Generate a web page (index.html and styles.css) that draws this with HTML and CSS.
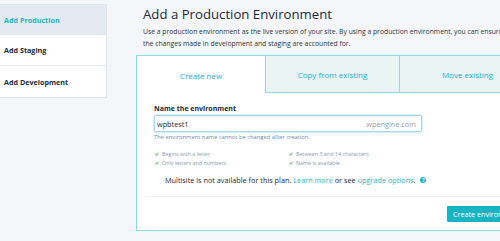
FILE: index.html
```html
<!DOCTYPE html>
<html>
<head>
<meta charset="utf-8">
<link rel="stylesheet" href="styles.css">
</head>
<body>
<div class="page">
  <nav class="sidebar">
    <div class="nav-item active">Add Production</div>
    <div class="nav-item">Add Staging</div>
    <div class="nav-item">Add Development</div>
  </nav>
  <main class="main">
    <h1 class="title">Add a Production Environment</h1>
    <p class="desc">Use a production environment as the live version of your site. By using a production environment, you can ensure that the changes made in development and staging are accounted for.</p>
    <div class="card">
      <div class="tabs">
        <div class="tab active">Create new</div>
        <div class="tab second">Copy from existing</div>
        <div class="tab">Move existing</div>
      </div>
      <div class="form">
        <div class="label">Name the environment</div>
        <div class="input">
          <span class="value">wpbtest1</span>
          <span class="suffix">.wpengine.com</span>
        </div>
        <div class="help">The environment name cannot be changed after creation.</div>
        <ul class="checks">
          <li><span class="tick">&#10004;</span>Begins with a letter</li>
          <li><span class="tick">&#10004;</span>Between 3 and 14 characters</li>
          <li><span class="tick">&#10004;</span>Only letters and numbers</li>
          <li><span class="tick">&#10004;</span>Name is available</li>
        </ul>
        <div class="multisite">Multisite is not available for this plan. <a class="link">Learn more</a> or see <a class="link">upgrade options</a>. <span class="qicon">?</span></div>
      </div>
      <div class="footer">
        <button class="btn">Create environment</button>
      </div>
    </div>
  </main>
</div>
</body>
</html>
```

FILE: styles.css
```css
html, body {
  margin: 0;
  padding: 0;
  overflow: hidden;
  background: #f4f6f9;
}
body {
  width: 500px;
  height: 241px;
  font-family: "Open Sans", "Liberation Sans", sans-serif;
  color: #1d2b3a;
}
.page {
  display: flex;
  align-items: flex-start;
  width: 640px;
}
.sidebar {
  width: 107px;
  margin-top: 4px;
  background: #fff;
  border: 1px solid #e1e5ea;
  border-left: none;
  box-sizing: border-box;
  flex-shrink: 0;
}
.nav-item {
  height: 31px;
  display: flex;
  align-items: center;
  padding-left: 4px;
  font-size: 7.2px;
  font-weight: 700;
  color: #1d2b3a;
  border-bottom: 1px solid #e6e9ee;
  box-sizing: border-box;
}
.nav-item:last-child {
  border-bottom: none;
}
.nav-item.active {
  background: #e3eaf1;
  color: #1fb5c4;
  height: 30px;
}
.main {
  margin-left: 29px;
  width: 420px;
  flex-shrink: 0;
}
.title {
  margin: 6px 0 0 7px;
  font-size: 13.2px;
  font-weight: 400;
  line-height: 17px;
  color: #1d2b3a;
}
.desc {
  margin: 3px 0 0 7px;
  width: 380px;
  font-size: 6.8px;
  line-height: 12px;
  color: #2a3848;
}
.card {
  margin-top: 5px;
  width: 400px;
  background: #fff;
  border: 1px solid #8fdbe2;
  box-sizing: border-box;
  height: 176px;
}
.tabs {
  display: flex;
  height: 37px;
}
.tab {
  flex: 1;
  display: flex;
  align-items: center;
  justify-content: center;
  font-size: 8px;
  color: #17b2c2;
  background: #eaf4f5;
  border-left: 1px solid #8fdbe2;
  border-bottom: 1px solid #8fdbe2;
  padding-top: 1px;
  box-sizing: border-box;
}
.tab.active {
  flex: 0 0 128px;
  background: #fff;
  border-left: none;
  border-bottom: none;
}
.tab.second {
  flex: 0 0 134px;
}
.form {
  margin: 0 0 0 9px;
  width: 380px;
  padding: 11px 0 11px 8px;
  border-bottom: 1px solid #eef1f4;
}
.label {
  font-size: 7px;
  font-weight: 700;
  line-height: 9px;
  color: #1d2b3a;
}
.input {
  margin-top: 2px;
  width: 268px;
  height: 17px;
  box-sizing: border-box;
  border: 1px solid #a9d7f0;
  box-shadow: 0 0 0 1px #d8eefa;
  border-radius: 2px;
  display: flex;
  align-items: center;
  justify-content: space-between;
  padding: 0 5px 0 2px;
  font-size: 7.3px;
}
.value {
  color: #1d2b3a;
}
.suffix {
  color: #93a3b5;
}
.help {
  margin-top: 0;
  font-size: 5.8px;
  line-height: 10px;
  color: #6f88aa;
}
.checks {
  list-style: none;
  margin: 8px 0 0 1px;
  padding: 0;
  display: grid;
  grid-template-columns: 134px 134px;
  row-gap: 0;
}
.checks li {
  font-size: 5.4px;
  line-height: 8.5px;
  color: #8899ae;
  display: flex;
  align-items: center;
}
.tick {
  color: #3aa845;
  font-size: 5px;
  width: 7px;
}
.multisite {
  margin: 8px 0 0 11px;
  font-size: 7.3px;
  line-height: 10px;
  color: #1d2b3a;
  display: flex;
  align-items: center;
  white-space: pre;
}
.link {
  color: #1fb5c4;
}
.qicon {
  display: inline-flex;
  align-items: center;
  justify-content: center;
  width: 6px;
  height: 6px;
  border-radius: 50%;
  background: #1fb5c4;
  color: #fff;
  font-size: 5px;
  font-weight: 700;
  margin-left: 3px;
}
.footer {
  display: flex;
  padding-top: 9px;
  padding-left: 310px;
}
.btn {
  width: 80px;
  height: 16px;
  border: none;
  background: #18b4c3;
  color: #fff;
  font-family: "Open Sans", "Liberation Sans", sans-serif;
  font-size: 7.2px;
  padding: 0 0 0 6px;
  text-align: left;
  border-radius: 1px;
  white-space: nowrap;
  overflow: hidden;
}
```
